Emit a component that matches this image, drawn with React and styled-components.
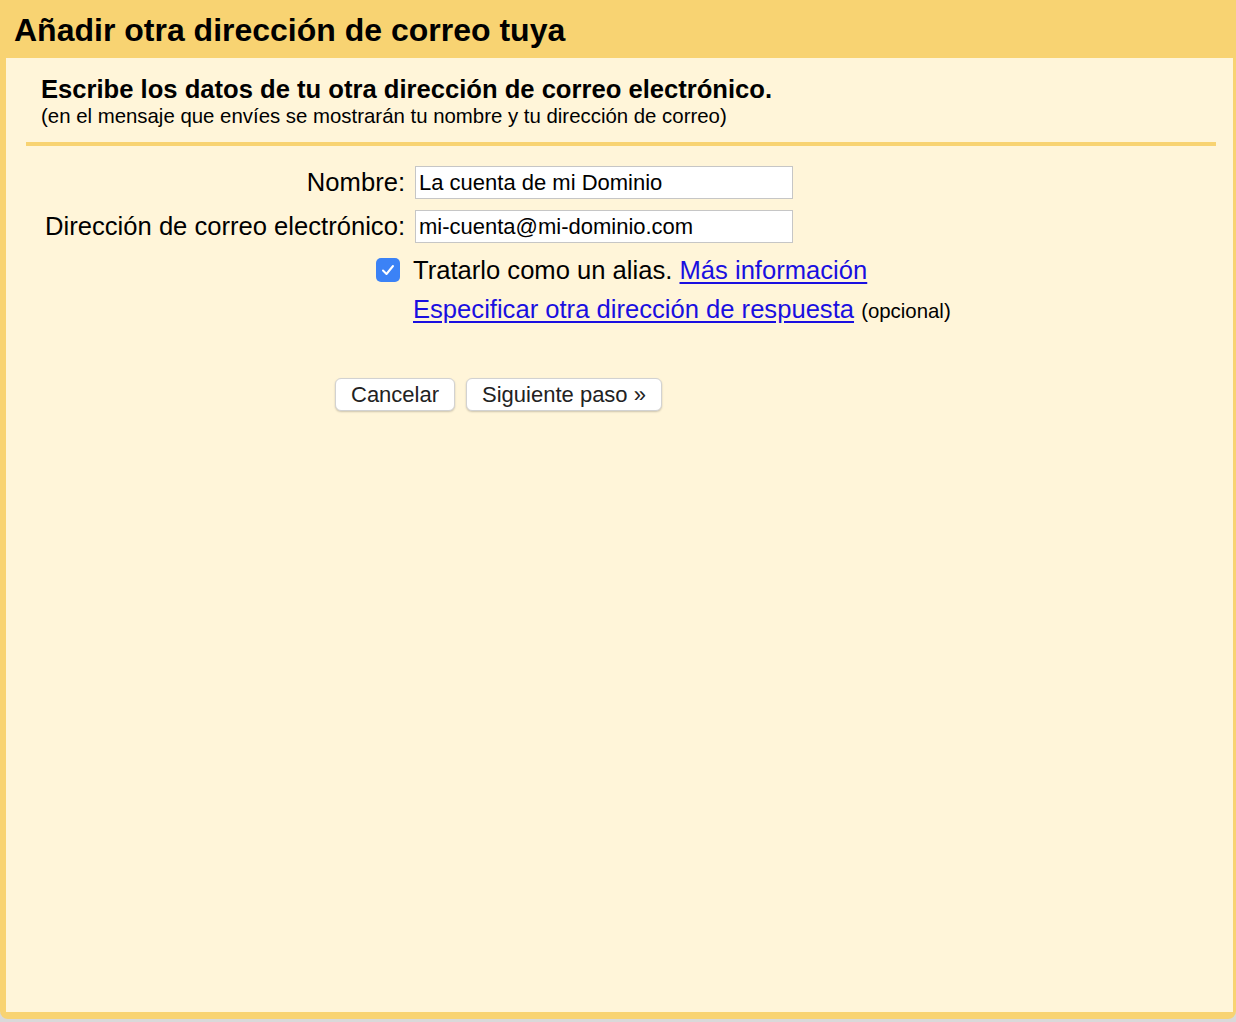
import styled, { createGlobalStyle } from "styled-components";

const GlobalStyle = createGlobalStyle`
	html, body {
		margin: 0;
		padding: 0;
		background: #d9d9d9;
	}

	body {
		font-family: "Liberation Sans", Arial, sans-serif;
		color: #000;
	}
`;

const Page = styled.div`
	width: 1236px;
	height: 1022px;
	overflow: hidden;
	display: flex;
	flex-direction: column;
`;

const Dialog = styled.section`
	height: 1019px;
	flex-shrink: 0;
	box-sizing: border-box;
	background: #f8d372;
	border-radius: 0 0 8px 8px;
	padding: 0 3px 7px 6px;

	display: flex;
	flex-direction: column;
`;

const DialogTitle = styled.h1`
	margin: 0;
	height: 58px;
	padding: 3px 0 0 8px;
	box-sizing: border-box;
	display: flex;
	align-items: center;

	font-size: 32px;
	font-weight: 700;
`;

const Panel = styled.div`
	flex: 1;
	background: #fff5d9;
	padding: 17px 17px 0 20px;
`;

const Intro = styled.div`
	padding: 0 0 14px 15px;
	border-bottom: 4px solid #f8d372;
`;

const IntroTitle = styled.p`
	margin: 0;
	font-size: 25.6px;
	font-weight: 700;
	line-height: 29px;
`;

const IntroNote = styled.p`
	margin: 0;
	font-size: 20.4px;
	line-height: 24px;
`;

const Form = styled.div`
	display: grid;
	grid-template-columns: 379px 380px;
	column-gap: 10px;
	margin-top: 20px;
	align-items: center;
`;

const Label = styled.label`
	align-self: start;
	text-align: right;
	font-size: 25.6px;
	line-height: 30px;
	padding-top: 1px;
	white-space: nowrap;
`;

const Input = styled.input`
	width: 378px;
	height: 33px;
	box-sizing: border-box;
	margin-bottom: 11px;
	border: 1px solid #c6c6c6;
	background: #fff;
	padding: 0 3px;
	font-family: "Liberation Sans", Arial, sans-serif;
	font-size: 22px;
	color: #000;
	outline: none;
`;

const CheckCell = styled.div`
	display: flex;
	justify-content: flex-end;
	padding-right: 5px;
`;

const Check = styled.span`
	width: 24px;
	height: 24px;
	border-radius: 5px;
	background: #3b82f6;
	display: flex;
	align-items: center;
	justify-content: center;
`;

const Line = styled.div`
	margin: ${({ $gap }) => $gap || 0}px 0 0 -2px;
	font-size: 25.6px;
	line-height: 32px;
	white-space: nowrap;
`;

const Link = styled.a`
	color: #1a0fe0;
	text-decoration: underline;
	text-underline-offset: 3px;
	cursor: pointer;
`;

const Small = styled.span`
	font-size: 20.4px;
`;

const Buttons = styled.div`
	display: flex;
	gap: 11px;
	margin: 51px 0 0 309px;
`;

const Button = styled.button`
	height: 33px;
	padding: 0 15px;
	border: 1px solid #d2d2d2;
	border-radius: 6px;
	background: #fff;
	box-shadow: 0 1px 2px rgba(0, 0, 0, 0.2);
	font-family: "Liberation Sans", Arial, sans-serif;
	font-size: 22px;
	color: #222;
	cursor: pointer;
`;

const Footer = styled.div`
	flex: 1;
	display: flex;
	padding-left: 70px;
	font-size: 14px;
	color: #222;
	line-height: 20px;
	gap: 300px;
	white-space: nowrap;
`;

const CheckIcon = () => (
	<svg width="20" height="20" viewBox="0 0 20 20" fill="none">
		<path d="M5 10.5 L8.5 14 L15 6" stroke="#fff" strokeWidth="2" strokeLinecap="round" strokeLinejoin="round" />
	</svg>
);

export default function App() {
	return (
		<Page>
			<GlobalStyle />
			<Dialog>
				<DialogTitle>Añadir otra dirección de correo tuya</DialogTitle>
				<Panel>
					<Intro>
						<IntroTitle>Escribe los datos de tu otra dirección de correo electrónico.</IntroTitle>
						<IntroNote>(en el mensaje que envíes se mostrarán tu nombre y tu dirección de correo)</IntroNote>
					</Intro>

					<Form>
						<Label>Nombre:</Label>
						<Input defaultValue="La cuenta de mi Dominio" />

						<Label>Dirección de correo electrónico:</Label>
						<Input defaultValue="mi-cuenta@mi-dominio.com" />

						<CheckCell>
							<Check><CheckIcon /></Check>
						</CheckCell>
						<Line>
							Tratarlo como un alias. <Link>Más información</Link>
						</Line>

						<span />
						<Line $gap={7}>
							<Link>Especificar otra dirección de respuesta</Link> <Small>(opcional)</Small>
						</Line>
					</Form>

					<Buttons>
						<Button>Cancelar</Button>
						<Button>Siguiente paso »</Button>
					</Buttons>
				</Panel>
			</Dialog>
			<Footer>
				<span>Idioma de visualización de Gmail: Español</span>
				<span>Cambiar la configuración de idioma de otros productos de Google</span>
			</Footer>
		</Page>
	);
}
